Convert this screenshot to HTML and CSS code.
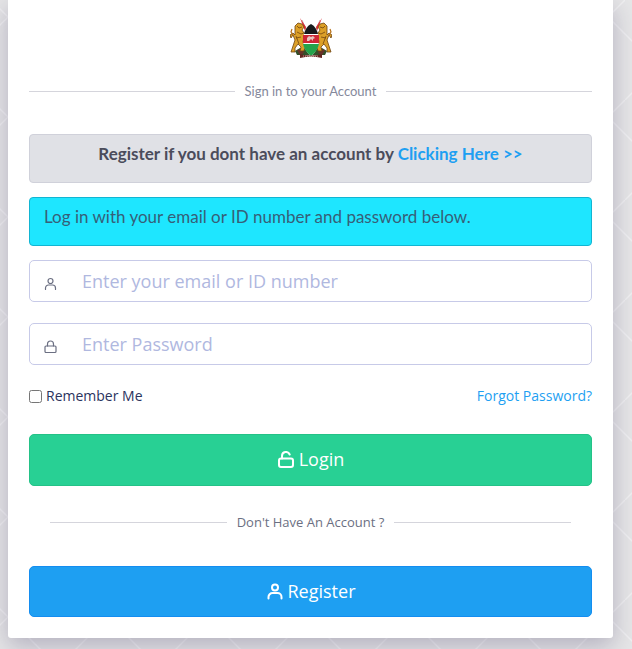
FILE: index.html
```html
<!DOCTYPE html>
<html lang="en">
<head>
<meta charset="utf-8">
<meta name="viewport" content="width=device-width, initial-scale=1">
<title>Sign in to your Account</title>
<link rel="stylesheet" href="styles.css">
</head>
<body>
<main class="card">
  <svg class="logo" viewBox="0 0 42 42" role="img" aria-label="Coat of arms">
    <path d="M12 2l14 34M30 2L16 36" stroke="#c9a9a5" stroke-width="1"/>
    <path d="M10 0l6 9-1 4zM32 0l-6 9 1 4z" fill="#d92e36"/>
    <path d="M5 33l5-3 11 2 11-2 5 3-2 4H7z" fill="#34502a"/>
    <path d="M7 32l5-1 2 4-4 2zM35 32l-5-1-2 4 4 2z" fill="#68322a"/>
    <g id="lion" fill="#dca028" stroke="#704410" stroke-width=".8">
      <path d="M5 8l3-3 4 1 2 3-2 3 2 3 4-2 1 2-5 4-1 5 2 5-1 4h-4l1-4-3-3-3 4v4H1l2-6 2-6-2-5-2 3-1-3 3-2 2 2z"/>
      <path d="M7 8l2 2 3-1M7 14l4 2 3-1M6 20l5-1M6 18l3 8" fill="none"/>
      <path d="M3 17L1 14l1-3" fill="none" stroke="#b66f17" stroke-width="1.2"/>
    </g>
    <use href="#lion" transform="translate(42 0) scale(-1 1)"/>
    <path d="M21 6c5 3 8 10 8 16s-3 12-8 16c-5-4-8-10-8-16s3-13 8-16z" fill="#fff"/>
    <path d="M21 6c4 2 6 6 7 10H14c1-4 3-8 7-10z" fill="#17191b"/>
    <path d="M13 17h16v8H13z" fill="#ce2836"/>
    <path d="M13 26h16c-1 5-4 9-8 12-4-3-7-7-8-12z" fill="#24a34a"/>
    <path d="M17 23v-3l2-2 2 1 2-1 2 2-2 1v2l-2-2-2 2z" fill="#e6c5be"/>
    <path d="M10 36q11 3 22 0v4q-11-3-22 0z" fill="#63251f"/>
    <path d="M13 38q8 1 16 0" fill="none" stroke="#d7b0a4" stroke-dasharray="1 1"/>
  </svg>

  <h1 class="divider">Sign in to your Account</h1>

  <p class="notice notice-register">Register if you dont have an account by <a href="#">Clicking Here &gt;&gt;</a></p>
  <p class="notice notice-login">Log in with your email or ID number and password below.</p>

  <form>
    <div class="field">
      <label for="username" aria-label="Email or ID number">
        <svg class="icon" viewBox="0 0 14 14"><circle cx="6.5" cy="4" r="2.5"/><path d="M1.5 12.500v-1.500a3 3 0 0 1 3-3h4a3 3 0 0 1 3 3v1.500"/></svg>
      </label>
      <input id="username" type="text" placeholder="Enter your email or ID number">
    </div>
    <div class="field">
      <label for="password" aria-label="Password">
        <svg class="icon" viewBox="0 0 14 14"><rect x="1" y="6" width="11" height="6.500" rx="1"/><path d="M3.500 6V4a3 3 0 0 1 6 0v2"/></svg>
      </label>
      <input id="password" type="password" placeholder="Enter Password">
    </div>
    <div class="options">
      <label class="remember"><input type="checkbox">Remember Me</label>
      <a href="#">Forgot Password?</a>
    </div>
    <button class="button button-login" type="submit">
      <svg class="icon" viewBox="0 0 18 18"><rect x="2" y="7.500" width="14" height="8.500" rx="2"/><path d="M5 7.500V5a4 4 0 0 1 7.700-1.500"/></svg>
      Login
    </button>
  </form>

  <p class="divider divider-account">Don't Have An Account ?</p>

  <a class="button button-register" href="#">
    <svg class="icon" viewBox="0 0 18 18"><circle cx="9" cy="4.500" r="3"/><path d="M2.500 15.500v-1.500a4 4 0 0 1 4-4h5a4 4 0 0 1 4 4v1.500"/></svg>
    Register
  </a>
</main>
</body>
</html>
```
FILE: styles.css
```css
* {
  box-sizing: border-box;
}

body {
  margin: 0;
  min-height: 100vh;
  font: 14px/20px "Open Sans", sans-serif;
  color: #2b335e;
  background-color: #e6e6e7;
  background-image:
    linear-gradient(45deg, transparent 49%, #f0f0f1 50%, transparent 51%),
    linear-gradient(135deg, transparent 49%, #f0f0f1 50%, transparent 51%);
  background-size: 100px 100px;
  background-position: 91px 0, 25px 0;
}

a {
  color: #1e9ff2;
  text-decoration: none;
}

.card {
  margin: 0 19px 11px 8px;
  padding: 18px 21px 21px;
  background: #fff;
  border-radius: 0 0 3px 3px;
  box-shadow: 0 8px 24px rgba(45, 35, 85, 0.28);
}

.logo {
  display: block;
  width: 42px;
  height: 42px;
  margin: 0 auto 21px;
}

.divider {
  display: flex;
  align-items: center;
  gap: 10px;
  margin: 0 0 33px;
  font: 400 13px/20px Lato, sans-serif;
  color: #85889b;
}

.divider::before,
.divider::after {
  content: "";
  flex: 1;
  height: 1px;
  background: #d5d5dc;
}

.notice {
  min-height: 49px;
  margin: 0 0 14px;
  padding: 7px 14px;
  border: 1px solid #d0d1da;
  border-radius: 4px;
  font: 17px/24px Lato, sans-serif;
}

.notice-register {
  background: #e0e1e6;
  color: #4b4c5b;
  font-weight: 700;
  text-align: center;
}

.notice-login {
  background: #1ee6ff;
  border-color: #12b5d2;
  color: #365f78;
}

.icon {
  fill: none;
  stroke: currentColor;
  stroke-linecap: round;
  stroke-linejoin: round;
}

.field {
  display: flex;
  align-items: center;
  height: 42px;
  margin-bottom: 21px;
  border: 1px solid #c7cae8;
  border-radius: 5px;
}

.field label {
  flex: none;
  width: 52px;
  padding: 6px 0 0 14px;
  color: #6b6f82;
}

.field .icon {
  display: block;
  width: 14px;
  height: 14px;
  stroke-width: 1.2;
}

.field input {
  flex: 1;
  min-width: 0;
  height: 40px;
  padding: 0;
  border: 0;
  outline: 0;
  background: transparent;
  font: 18px/24px "Open Sans", sans-serif;
  color: #4e5154;
}

.field input::placeholder {
  color: #b0b8df;
}

.options {
  display: flex;
  justify-content: space-between;
  margin-bottom: 28px;
}

.remember {
  display: flex;
  align-items: center;
  gap: 4px;
}

.remember input {
  width: 13px;
  height: 13px;
  margin: 0;
}

.button {
  display: flex;
  align-items: center;
  justify-content: center;
  gap: 4px;
  width: 100%;
  padding: 12px 0 13px;
  border: 1px solid;
  border-radius: 5px;
  font: 18px/25px "Open Sans", sans-serif;
  color: #fff;
}

.button .icon {
  width: 18px;
  height: 18px;
  stroke-width: 2;
}

.button-login {
  background: #28d094;
  border-color: #24c287;
}

.button-register {
  padding-bottom: 12px;
  background: #1e9ff2;
  border-color: #148df0;
}

.divider-account {
  margin: 26px 21px 34px;
  font-family: "Open Sans", sans-serif;
  color: #6b6f82;
}
```
